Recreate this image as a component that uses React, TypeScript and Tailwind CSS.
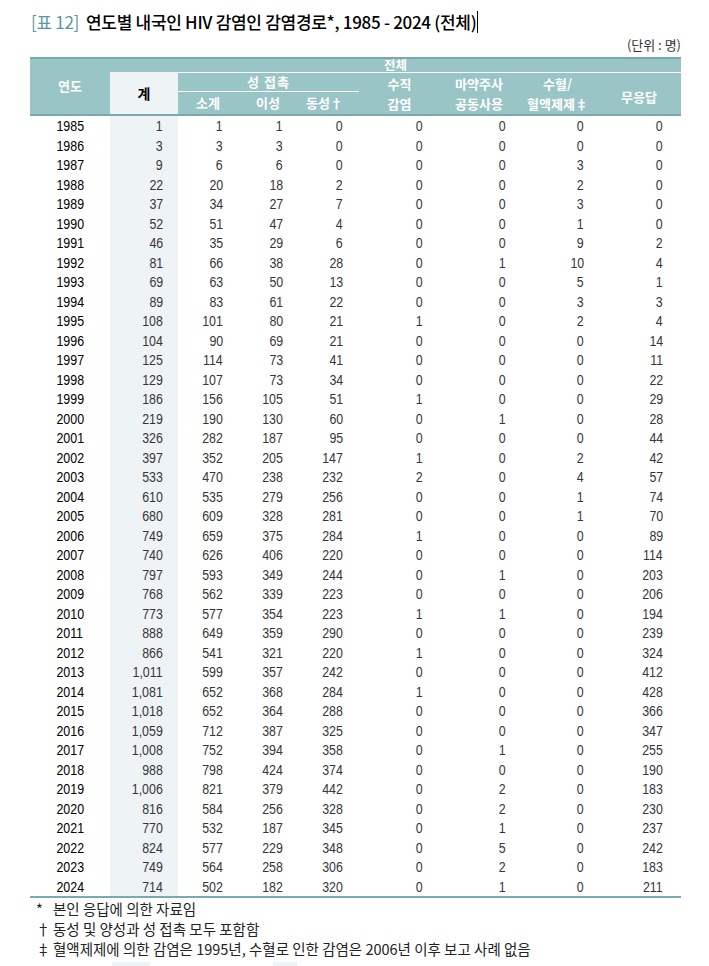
import React from 'react';

type Row = [string, string, string, string, string, string, string, string, string];

const rows: Row[] = [
  ['1985', '1', '1', '1', '0', '0', '0', '0', '0'],
  ['1986', '3', '3', '3', '0', '0', '0', '0', '0'],
  ['1987', '9', '6', '6', '0', '0', '0', '3', '0'],
  ['1988', '22', '20', '18', '2', '0', '0', '2', '0'],
  ['1989', '37', '34', '27', '7', '0', '0', '3', '0'],
  ['1990', '52', '51', '47', '4', '0', '0', '1', '0'],
  ['1991', '46', '35', '29', '6', '0', '0', '9', '2'],
  ['1992', '81', '66', '38', '28', '0', '1', '10', '4'],
  ['1993', '69', '63', '50', '13', '0', '0', '5', '1'],
  ['1994', '89', '83', '61', '22', '0', '0', '3', '3'],
  ['1995', '108', '101', '80', '21', '1', '0', '2', '4'],
  ['1996', '104', '90', '69', '21', '0', '0', '0', '14'],
  ['1997', '125', '114', '73', '41', '0', '0', '0', '11'],
  ['1998', '129', '107', '73', '34', '0', '0', '0', '22'],
  ['1999', '186', '156', '105', '51', '1', '0', '0', '29'],
  ['2000', '219', '190', '130', '60', '0', '1', '0', '28'],
  ['2001', '326', '282', '187', '95', '0', '0', '0', '44'],
  ['2002', '397', '352', '205', '147', '1', '0', '2', '42'],
  ['2003', '533', '470', '238', '232', '2', '0', '4', '57'],
  ['2004', '610', '535', '279', '256', '0', '0', '1', '74'],
  ['2005', '680', '609', '328', '281', '0', '0', '1', '70'],
  ['2006', '749', '659', '375', '284', '1', '0', '0', '89'],
  ['2007', '740', '626', '406', '220', '0', '0', '0', '114'],
  ['2008', '797', '593', '349', '244', '0', '1', '0', '203'],
  ['2009', '768', '562', '339', '223', '0', '0', '0', '206'],
  ['2010', '773', '577', '354', '223', '1', '1', '0', '194'],
  ['2011', '888', '649', '359', '290', '0', '0', '0', '239'],
  ['2012', '866', '541', '321', '220', '1', '0', '0', '324'],
  ['2013', '1,011', '599', '357', '242', '0', '0', '0', '412'],
  ['2014', '1,081', '652', '368', '284', '1', '0', '0', '428'],
  ['2015', '1,018', '652', '364', '288', '0', '0', '0', '366'],
  ['2016', '1,059', '712', '387', '325', '0', '0', '0', '347'],
  ['2017', '1,008', '752', '394', '358', '0', '1', '0', '255'],
  ['2018', '988', '798', '424', '374', '0', '0', '0', '190'],
  ['2019', '1,006', '821', '379', '442', '0', '2', '0', '183'],
  ['2020', '816', '584', '256', '328', '0', '2', '0', '230'],
  ['2021', '770', '532', '187', '345', '0', '1', '0', '237'],
  ['2022', '824', '577', '229', '348', '0', '5', '0', '242'],
  ['2023', '749', '564', '258', '306', '0', '2', '0', '183'],
  ['2024', '714', '502', '182', '320', '0', '1', '0', '211'],
];

const kr = "font-['Noto_Sans_CJK_KR',sans-serif]";
const num = "font-['Liberation_Sans',sans-serif]";

// column template shared by header and body
const cols = 'grid grid-cols-[80px_68px_60px_60px_61px_81px_78px_79px_84px]';

// right-aligned number, squeezed to look like the narrow face in the scan
const Num = ({ v, pr, bg }: { v: string; pr: string; bg?: boolean }) => (
  <div className={`text-right ${pr} text-[#363636] ${bg ? 'bg-[#eef3f5]' : ''}`}>
    <span className="inline-block scale-x-[0.8] origin-right">{v}</span>
  </div>
);

export default function App() {
  return (
    <div className="w-[709px] h-[966px] bg-white relative overflow-hidden text-[#222]">
      {/* title */}
      <div className={`pl-[31px] pt-[10px] h-[34px] leading-[24px] text-[17px] tracking-[-0.3px] ${kr} flex items-center`}>
        <span className="text-[#5d95a8]">[표 12]</span>
        <span className="ml-[7px] font-medium text-black">연도별 내국인 HIV 감염인 감염경로*, 1985 - 2024 (전체)</span>
        <span className="ml-[1px] w-px h-[22px] bg-black" />
      </div>
      <div className={`w-[681px] mt-[3px] text-right text-[13px] leading-[16px] text-[#333] ${kr}`}>(단위 : 명)</div>

      {/* table */}
      <div className="ml-[30px] mt-[4px] w-[651px]">
        <div className={`${cols} grid-rows-[13px_20px_22px] bg-[#99c5c6] border-t-2 border-b-2 border-[#79aaad] text-white text-[13px] font-bold ${kr}`}>
          <div className="row-span-3 flex items-center justify-center pb-[2px]">연도</div>
          <div className="col-span-8 flex items-center justify-center leading-none pb-[1px] text-[12.5px]">전체</div>
          <div className="row-span-2 bg-[#eef3f5] flex items-center justify-center text-black font-bold text-[14px]">계</div>
          <div className="col-span-3 border-t border-b border-white flex items-center justify-center tracking-[1px]">성 접촉</div>
          <div className="row-span-2 border-t border-white flex flex-col items-center justify-center leading-[20px]">
            <span>수직</span>
            <span>감염</span>
          </div>
          <div className="row-span-2 border-t border-white flex flex-col items-center justify-center leading-[20px]">
            <span>마약주사</span>
            <span>공동사용</span>
          </div>
          <div className="row-span-2 border-t border-white flex flex-col items-center justify-center leading-[20px]">
            <span>수혈/</span>
            <span>혈액제제‡</span>
          </div>
          <div className="row-span-2 border-t border-white flex items-center justify-center pt-[6px]">무응답</div>
          <div className="flex items-center justify-center">소계</div>
          <div className="flex items-center justify-center">이성</div>
          <div className="flex items-center justify-center pr-[8px]">동성†</div>
        </div>

        <div className={`border-b-2 border-[#79aaad] text-[15.5px] ${num}`}>
          {rows.map((r) => (
            <div key={r[0]} className={`${cols} h-[19.5px] leading-[19.5px]`}>
              <div className="text-center text-black">
                <span className="inline-block scale-x-[0.8]">{r[0]}</span>
              </div>
              <Num v={r[1]} pr="pr-[15px]" bg />
              <Num v={r[2]} pr="pr-[15px]" />
              <Num v={r[3]} pr="pr-[15px]" />
              <Num v={r[4]} pr="pr-[16px]" />
              <Num v={r[5]} pr="pr-[17px]" />
              <Num v={r[6]} pr="pr-[12px]" />
              <Num v={r[7]} pr="pr-[13px]" />
              <Num v={r[8]} pr="pr-[18px]" />
            </div>
          ))}
        </div>
      </div>

      {/* footnotes */}
      <div className={`ml-[36px] mt-px text-[14.5px] leading-[20px] text-[#222] ${kr}`}>
        <div className="flex"><span className="w-[17px]">*</span><span>본인 응답에 의한 자료임</span></div>
        <div className="flex"><span className="w-[17px]">†</span><span>동성 및 양성과 성 접촉 모두 포함함</span></div>
        <div className="flex"><span className="w-[17px]">‡</span><span>혈액제제에 의한 감염은 1995년, 수혈로 인한 감염은 2006년 이후 보고 사례 없음</span></div>
      </div>

      {/* faint cut-off boxes at the very bottom */}
      <div className="absolute left-[112px] bottom-0 w-[38px] h-[4px] bg-[#eef3f5]" />
      <div className="absolute left-[273px] bottom-0 w-[24px] h-[4px] bg-[#eef3f5]" />
    </div>
  );
}
